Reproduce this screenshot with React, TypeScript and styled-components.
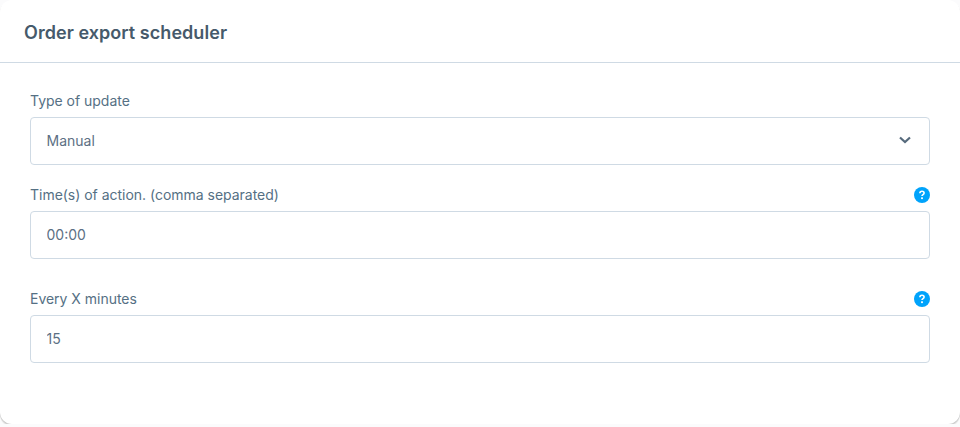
import React from "react";
import styled, { createGlobalStyle } from "styled-components";

const GlobalStyle = createGlobalStyle`
  html, body {
    margin: 0;
    padding: 0;
    background: #fbfbfc;
  }
  * {
    box-sizing: border-box;
  }
`;

function HelpIcon() {
  return (
    <svg width="16" height="16" viewBox="0 0 16 16" aria-hidden="true">
      <circle cx="8" cy="8" r="8" fill="#00a3fb" />
      <path
        d="M5.9 6.2c0-1.2 1-1.9 2.1-1.9 1.2 0 2.1.7 2.1 1.8 0 1.6-2.1 1.6-2.1 3"
        fill="none"
        stroke="#fff"
        strokeWidth="1.6"
      />
      <rect x="7.1" y="10.3" width="1.8" height="1.8" fill="#fff" />
    </svg>
  );
}

function Chevron() {
  return (
    <svg width="12" height="8" viewBox="0 0 12 8" aria-hidden="true">
      <path d="M1 1.5 6 6l5-4.5" fill="none" stroke="#566a7c" strokeWidth="2.2" />
    </svg>
  );
}

export default function App() {
  return (
    <>
      <GlobalStyle />
      <Card>
        <Header>
          <Title>Order export scheduler</Title>
        </Header>
        <Body>
          <SelectField>
            <LabelRow>
              <Label>Type of update</Label>
            </LabelRow>
            <SelectBox>
              <span>Manual</span>
              <Chevron />
            </SelectBox>
          </SelectField>
          <Field>
            <LabelRow>
              <Label>Time(s) of action. (comma separated)</Label>
              <HelpIcon />
            </LabelRow>
            <Input readOnly value="00:00" />
          </Field>
          <Field>
            <LabelRow>
              <Label>Every X minutes</Label>
              <HelpIcon />
            </LabelRow>
            <Input readOnly value="15" />
          </Field>
        </Body>
      </Card>
    </>
  );
}

const Card = styled.section`
  width: 960px;
  height: 424px;
  background: #fff;
  border-radius: 12px;
  box-shadow: 0 1px 0 #c8c8c8, 0 2px 0 #dedede, 0 3px 0 #f0f0f0;
  font-family: Inter, "Liberation Sans", sans-serif;
  color: #4f6272;
`;

const Header = styled.header`
  height: 63px;
  padding: 0 24px 0;
  display: flex;
  align-items: center;
  border-bottom: 1px solid #cfdae4;
`;

const Title = styled.h2`
  margin: 2px 0 0;
  font-size: 18px;
  font-weight: 600;
  letter-spacing: 0.05px;
  color: #465a6b;
`;

const Body = styled.div`
  padding: 27px 30px 0;
`;

const SelectField = styled.div`
  margin-bottom: 19px;
`;

const Field = styled.div`
  margin-bottom: 29px;
`;

const LabelRow = styled.div`
  height: 22px;
  margin-bottom: 5px;
  display: flex;
  align-items: center;
  justify-content: space-between;
`;

const Label = styled.label`
  margin-top: -2px;
  font-size: 14px;
  letter-spacing: -0.02px;
  color: #557084;
`;

const SelectBox = styled.div`
  height: 48px;
  padding: 0 18px 2px 15.5px;
  display: flex;
  align-items: center;
  justify-content: space-between;
  border: 1px solid #cfdae4;
  border-radius: 4px;
  font-size: 14px;
  color: #5c7084;
`;

const Input = styled.input`
  display: block;
  width: 100%;
  height: 48px;
  padding: 0 15.5px 2px;
  border: 1px solid #cfdae4;
  border-radius: 4px;
  outline: none;
  font-family: inherit;
  font-size: 14px;
  color: #5c7084;
`;
